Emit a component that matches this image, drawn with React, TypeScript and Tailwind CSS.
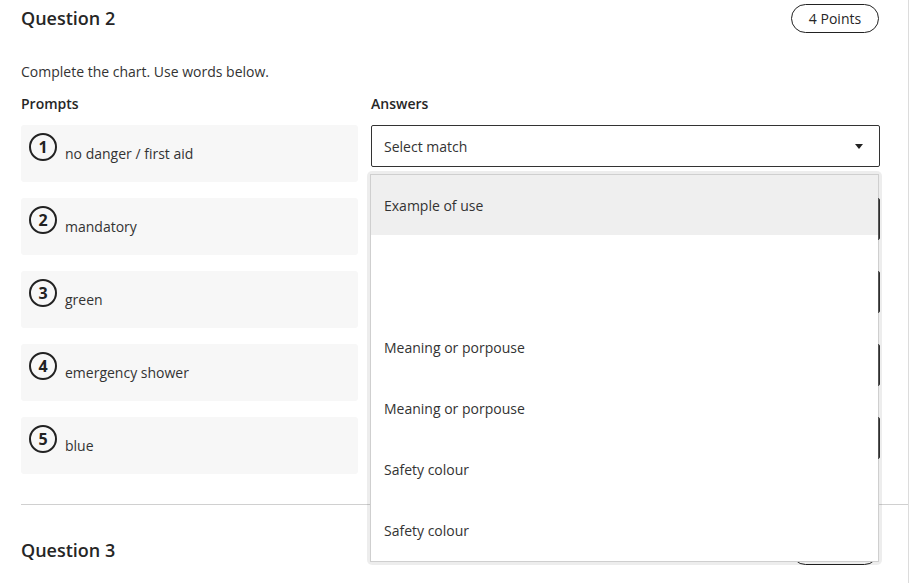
import React from "react";

const prompts = ["no danger / first aid", "mandatory", "green", "emergency shower", "blue"];

const options = [
  { label: "Example of use", h: "h-[60px]", active: true },
  { label: "", h: "h-[82px]" },
  { label: "Meaning or porpouse", h: "h-[61px]" },
  { label: "Meaning or porpouse", h: "h-[61px]" },
  { label: "Safety colour", h: "h-[61px]" },
  { label: "Safety colour", h: "h-[61px]" },
];

function Caret() {
  return (
    <svg width="8" height="5" viewBox="0 0 8 5" className="shrink-0">
      <path d="M0 0h8L4 5z" fill="#222" />
    </svg>
  );
}

function Points({ n }: { n: number }) {
  return (
    <div className="h-[29px] w-[88px] rounded-full border border-[#222] flex items-center justify-center text-[14px] font-medium text-[#262626]">
      {n} Points
    </div>
  );
}

function Dropdown() {
  return (
    <div className="absolute left-[-4px] top-[46px] w-[515px] p-[3px] rounded-[5px] bg-black/[0.07] z-10">
      <div className="relative bg-white border border-[#cfcfcf]">
        {options.map((o, i) => (
          <div
            key={i}
            className={`${o.h} flex items-center px-[13px] text-[14px] text-[#333] ${o.active ? "bg-[#efefef]" : ""}`}
          >
            {o.label}
          </div>
        ))}
        {/* edges of the selects lying underneath */}
        <div className="absolute right-[-1px] top-[23px] h-[42px] w-px bg-[#555]" />
        <div className="absolute right-[-1px] top-[96px] h-[42px] w-px bg-[#555]" />
        <div className="absolute right-[-1px] top-[169px] h-[42px] w-px bg-[#555]" />
        <div className="absolute right-[-1px] top-[242px] h-[42px] w-px bg-[#555]" />
      </div>
    </div>
  );
}

export default function App() {
  return (
    <div className="w-[909px] h-[583px] overflow-hidden bg-white border-r border-[#dcdcdc] font-['Open_Sans',sans-serif] text-[#333]">
      <div className="pl-[21px] pr-[29px] pt-[4px]">
        <div className="flex items-center justify-between">
          <h2 className="text-[18px] font-semibold text-[#262626] leading-[29px]">Question 2</h2>
          <Points n={4} />
        </div>

        <p className="mt-[29px] text-[14px] leading-5">Complete the chart. Use words below.</p>

        <div className="mt-[12px] mb-[11px] grid grid-cols-[337px_509px] gap-x-[13px] text-[14px] leading-5 font-semibold text-[#262626]">
          <div>Prompts</div>
          <div>Answers</div>
        </div>

        <div className="grid grid-cols-[337px_509px] gap-x-[13px] gap-y-[16px]">
          {prompts.map((p, i) => (
            <React.Fragment key={i}>
              <div className="h-[57px] rounded-[3px] bg-[#f7f7f7] p-2 flex items-start gap-[8px]">
                <div className="w-[28px] h-[28px] shrink-0 rounded-full border-2 border-[#222] flex items-center justify-center text-[16px] font-bold text-[#222] leading-none">
                  {i + 1}
                </div>
                <span className="mt-[11px] text-[14px] leading-5 text-[#333]">{p}</span>
              </div>
              <div className="relative">
                <div className="h-[42px] rounded-[2px] border border-[#333] bg-white flex items-center justify-between pl-[12px] pr-[16px] text-[14px] text-[#333]">
                  <span>{i === 0 ? "Select match" : ""}</span>
                  <Caret />
                </div>
                {i === 0 && <Dropdown />}
              </div>
            </React.Fragment>
          ))}
        </div>
      </div>

      <div className="mt-[30px] ml-[21px] h-px bg-[#d0d0d0]" />

      <div className="pl-[21px] pr-[29px] mt-[31px] flex items-center justify-between">
        <h2 className="text-[18px] font-semibold text-[#262626] leading-[29px]">Question 3</h2>
        <Points n={3} />
      </div>
    </div>
  );
}
